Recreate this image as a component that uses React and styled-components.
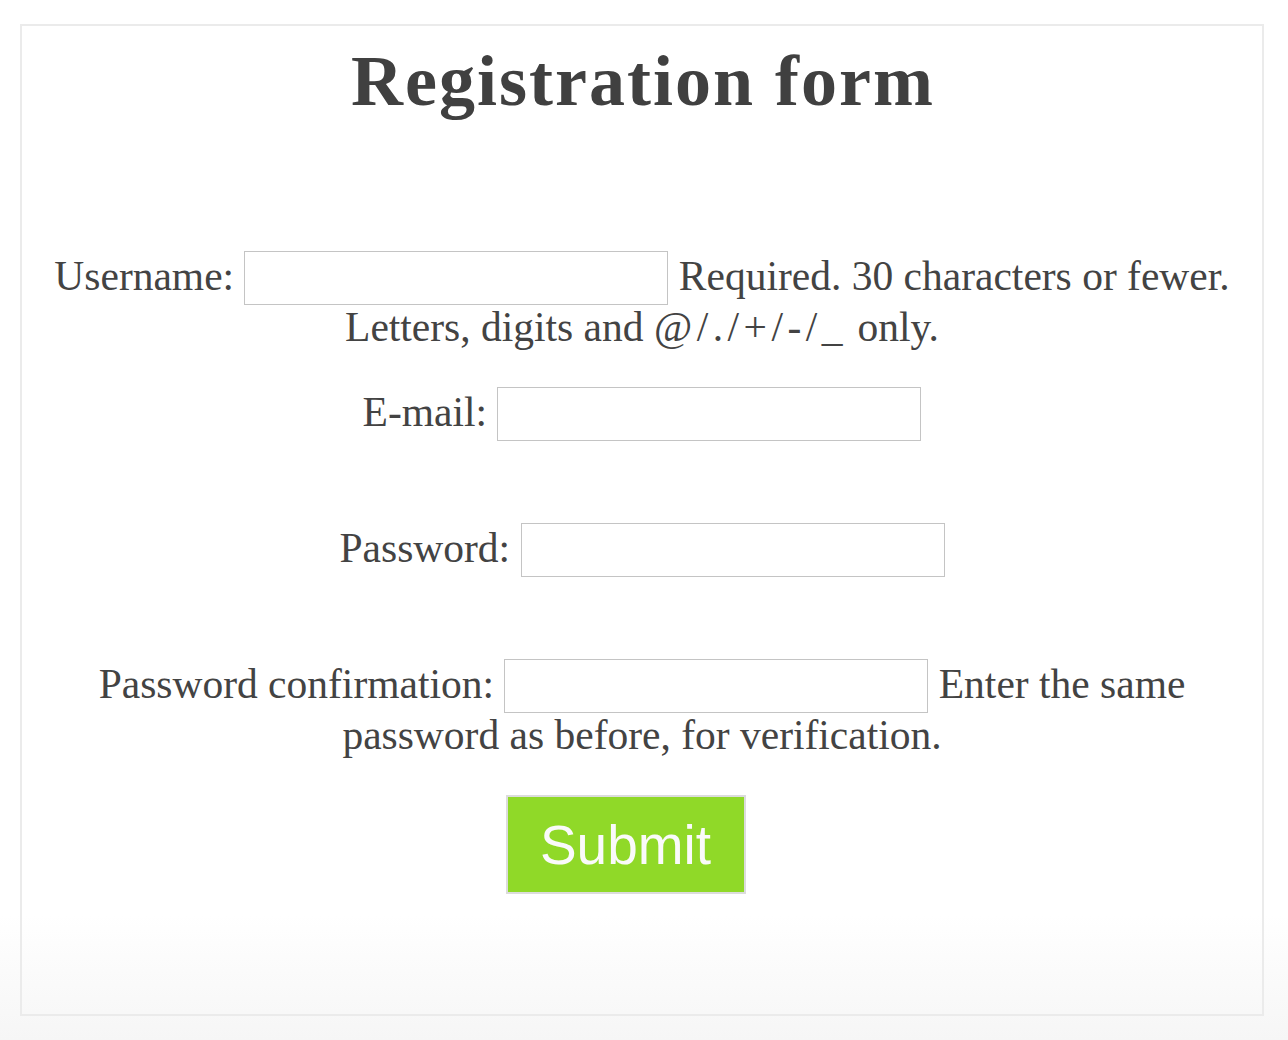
import React from "react";
import styled, { createGlobalStyle } from "styled-components";

const GlobalStyle = createGlobalStyle`
  html {
    min-height: 100%;
    background: linear-gradient(to bottom, #ffffff 0%, #ffffff 88%, #f6f6f6 100%);
  }
  body {
    margin: 0;
    font-family: "Liberation Serif", "Times New Roman", serif;
    color: #434343;
  }
`;

const Card = styled.main`
  margin: 24px 24px 0 20px;
  border: 2px solid #ebebeb;
  padding: 12px 20px 120px;
  text-align: center;
`;

const Title = styled.h1`
  margin: 0;
  padding-left: 2px;
  font-size: 72px;
  line-height: 86px;
  font-weight: 700;
  letter-spacing: 2px;
  color: #404040;
`;

const Form = styled.form`
  margin-top: 127px;
`;

const Field = styled.p`
  margin: 0 0 32px;
  min-height: 104px;
  font-size: 41.5px;
  line-height: 50px;
`;

const Label = styled.label`
  color: #434343;
`;

const Input = styled.input`
  box-sizing: border-box;
  width: 424px;
  height: 54px;
  margin: 0 0 -3px;
  padding: 0 10px;
  border: 1px solid #c4c4c4;
  border-radius: 0;
  background: #fff;
  vertical-align: top;
  font: 20px "Liberation Sans", Arial, sans-serif;
  outline: none;
`;

const HelpText = styled.span`
  color: #434343;
`;

const Symbols = styled.span`
  letter-spacing: 4.5px;
`;

const ButtonRow = styled.div`
  display: flex;
  justify-content: center;
  padding-right: 33px;
`;

const SubmitButton = styled.button`
  box-sizing: border-box;
  width: 240px;
  height: 99px;
  padding: 0;
  border: 2px solid #dcdcdc;
  border-radius: 0;
  background: #90d928;
  color: #fafafa;
  font-family: "Liberation Sans", Arial, Helvetica, sans-serif;
  font-size: 55px;
  cursor: pointer;
`;

const fields = [
  {
    id: "id_username",
    label: "Username:",
    type: "text",
    help: (
      <>
        Required. 30 characters or fewer. Letters, digits and <Symbols>@/./+/-/_</Symbols> only.
      </>
    ),
  },
  { id: "id_email", label: "E-mail:", type: "email" },
  { id: "id_password1", label: "Password:", type: "password" },
  {
    id: "id_password2",
    label: "Password confirmation:",
    type: "password",
    help: "Enter the same password as before, for verification.",
  },
];

export default function App() {
  return (
    <>
      <GlobalStyle />
      <Card>
        <Title>Registration form</Title>
        <Form onSubmit={(e) => e.preventDefault()}>
          {fields.map((f) => (
            <Field key={f.id}>
              <Label htmlFor={f.id}>{f.label}</Label>{" "}
              <Input id={f.id} type={f.type} />
              {f.help ? (
                <>
                  {" "}
                  <HelpText>{f.help}</HelpText>
                </>
              ) : null}
            </Field>
          ))}
          <ButtonRow>
            <SubmitButton type="submit">Submit</SubmitButton>
          </ButtonRow>
        </Form>
      </Card>
    </>
  );
}
